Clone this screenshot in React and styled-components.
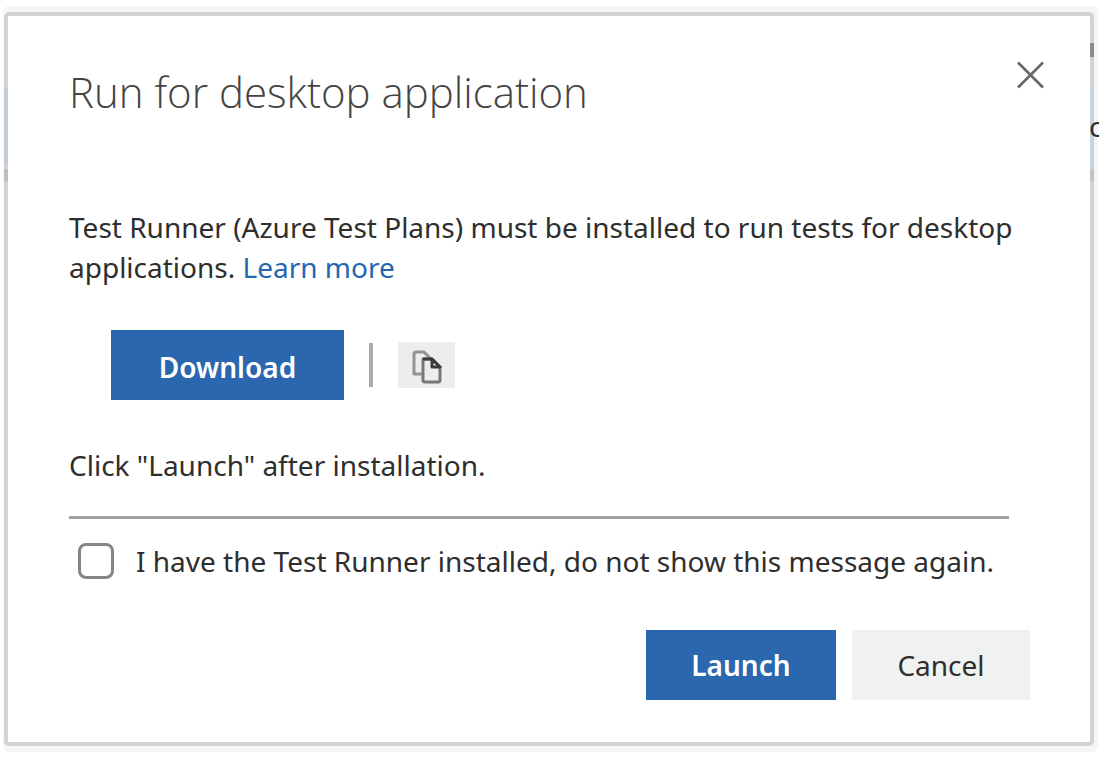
import React from "react";
import styled, { createGlobalStyle } from "styled-components";

const GlobalStyle = createGlobalStyle`
  * { box-sizing: border-box; }
  html, body { margin: 0; background: #fff; }
  body, button, input { font-family: "Noto Sans", "Open Sans", sans-serif; }
  body { color: #2e2e2e; }
`;

const Page = styled.main`
  position: relative;
  min-height: 100vh;
  padding: 12px 7px 10px 4px;
`;

/* Page content that shows past the dialog's edges */
const Backdrop = styled.div`
  position: absolute;
  inset: 6px 3px 5px 3px;
  background: #f4f5f5;
  border-radius: 6px;
`;

const EdgeStrip = styled.div`
  position: absolute;
  z-index: 1;
  top: ${(p) => p.$top}px;
  ${(p) => p.$side}: ${(p) => (p.$side === "left" ? 4 : 7)}px;
  width: 4px;
  height: ${(p) => p.$height}px;
  background: ${(p) => p.$color};
`;

const EdgeText = styled.div`
  position: absolute;
  z-index: 1;
  top: 110px;
  right: 2px;
  width: 10px;
  overflow: hidden;
  font-size: 28px;
  line-height: 32px;
`;

const Dialog = styled.section`
  position: relative;
  border: 4px solid #d0d2d3;
  border-radius: 5px;
  background: #fff;
  padding: 44px 60px 42px 61px;
`;

const Header = styled.header`
  display: flex;
  align-items: flex-start;
  justify-content: space-between;
  margin-right: -16px;
`;

const Title = styled.h1`
  margin: 0;
  color: #444;
  font-family: "Open Sans", sans-serif;
  font-size: 42px;
  font-weight: 300;
  line-height: 64px;
`;

const CloseButton = styled.button`
  width: 32px;
  height: 32px;
  padding: 0;
  border: 0;
  background: none;
  color: #666;
  svg { display: block; }
`;

const Text = styled.p`
  margin: 0;
  font-size: 28px;
  line-height: 40px;
`;

const Intro = styled(Text)`
  margin-top: 83px;
  margin-right: -16px;
`;

const Link = styled.a`
  color: #2566b0;
  text-decoration: none;
`;

const Actions = styled.div`
  display: flex;
  align-items: center;
  margin: 43px 0 45px 42px;
`;

const Button = styled.button`
  height: 70px;
  min-width: ${(p) => p.$width}px;
  padding: ${(p) => (p.$low ? 4 : 0)}px 0 0;
  border: 0;
  background: ${(p) => (p.$primary ? "#2b67ae" : "#f0f1f1")};
  color: ${(p) => (p.$primary ? "#fff" : "#2e2e2e")};
  font-size: 28px;
  font-weight: ${(p) => (p.$primary ? 600 : 400)};
`;

const Divider = styled.span`
  width: 4px;
  height: 44px;
  margin: 0 25px;
  background: #aaa;
`;

const CopyButton = styled.button`
  display: flex;
  align-items: center;
  justify-content: center;
  width: 57px;
  height: 46px;
  padding: 3px 0 0;
  border: 0;
  background: #eceeee;
`;

const Rule = styled.hr`
  height: 3px;
  margin: 31px 21px 22px 0;
  border: 0;
  background: #a0a0a0;
`;

const CheckLabel = styled.label`
  display: flex;
  align-items: center;
  gap: 22px;
  margin: 0 -12px 0 9px;
  font-size: 28px;
  line-height: 40px;
`;

const Checkbox = styled.input`
  appearance: none;
  flex: none;
  width: 36px;
  height: 36px;
  margin: 0;
  border: 3px solid #858787;
  border-radius: 8px;
  background: #fff;
  &:checked { background: #2b67ae; }
`;

const Footer = styled.footer`
  display: flex;
  justify-content: flex-end;
  gap: 16px;
  margin-top: 49px;
`;

export default function App() {
  return (
    <Page>
      <GlobalStyle />
      <Backdrop aria-hidden="true" />
      <Dialog role="dialog" aria-labelledby="dialog-title">
        <Header>
          <Title id="dialog-title">Run for desktop application</Title>
          <CloseButton aria-label="Close">
            <svg width="32" height="32" viewBox="0 0 32 32" fill="none" stroke="currentColor" strokeWidth="2.5">
              <path d="M4 2.500 29 27.500M29 2.500 4 27.500" />
            </svg>
          </CloseButton>
        </Header>
        <Intro>
          Test Runner (Azure Test Plans) must be installed to run tests for desktop applications.{" "}
          <Link href="#learn-more">Learn more</Link>
        </Intro>
        <Actions>
          <Button $primary $low $width={233}>Download</Button>
          <Divider />
          <CopyButton aria-label="Copy link">
            <svg width="30" height="34" viewBox="0 0 30 34" fill="none" strokeWidth="3" strokeLinejoin="round">
              <path d="M10 24H2V4Q2 2 4 2H12L19 9" stroke="#929292" />
              <path d="M11 9H20L28 17V30Q28 32 26 32H13Q11 32 11 30Z" stroke="#777" />
              <path d="M11 9H20L28 17H20V9" stroke="#3b3b3b" />
            </svg>
          </CopyButton>
        </Actions>
        <Text>Click "Launch" after installation.</Text>
        <Rule />
        <CheckLabel>
          <Checkbox type="checkbox" />
          I have the Test Runner installed, do not show this message again.
        </CheckLabel>
        <Footer>
          <Button $primary $width={190}>Launch</Button>
          <Button $width={178}>Cancel</Button>
        </Footer>
      </Dialog>
      <EdgeStrip $side="left" $top={88} $height={78} $color="#c3ced8" />
      <EdgeStrip $side="left" $top={169} $height={12} $color="#bcbebf" />
      <EdgeStrip $side="right" $top={43} $height={14} $color="#8a8c8c" />
      <EdgeStrip $side="right" $top={88} $height={78} $color="#c6d2dd" />
      <EdgeStrip $side="right" $top={169} $height={12} $color="#c2c4c5" />
      <EdgeText aria-hidden="true">c</EdgeText>
    </Page>
  );
}
